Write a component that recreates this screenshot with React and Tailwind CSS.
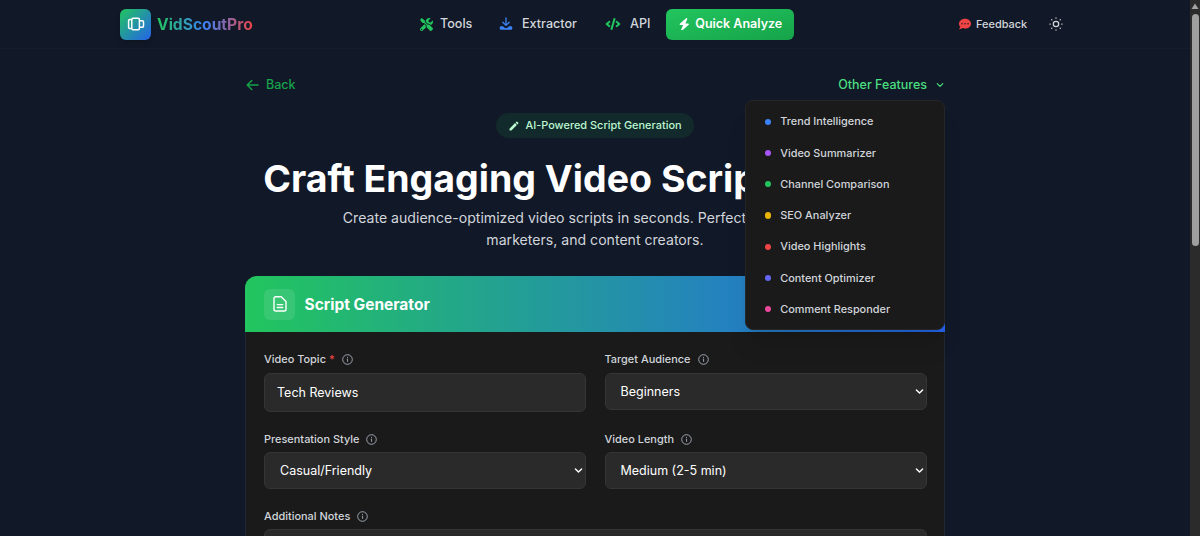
import React from "react";
import { FaTools, FaCode, FaCommentDots } from "react-icons/fa";
import { FaBolt } from "react-icons/fa6";
import { MdEdit } from "react-icons/md";

const features = [
  ["Trend Intelligence", "bg-[#3b82f6]"],
  ["Video Summarizer", "bg-[#a855f7]"],
  ["Channel Comparison", "bg-[#22c55e]"],
  ["SEO Analyzer", "bg-[#eab308]"],
  ["Video Highlights", "bg-[#ef4444]"],
  ["Content Optimizer", "bg-[#6366f1]"],
  ["Comment Responder", "bg-[#ec4899]"],
];

function LogoIcon() {
  return (
    <svg width="18" height="14" viewBox="0 0 18 14" fill="none" stroke="white" strokeWidth="1.5" strokeLinejoin="round">
      <rect x="4.8" y="1.2" width="7.6" height="11.6" rx="1.2" />
      <path d="M4.8 2.4H2.9a1.3 1.3 0 0 0-1.3 1.3v6.6a1.3 1.3 0 0 0 1.3 1.3h1.9" />
      <path d="M12.4 3.8h2.9a1.2 1.2 0 0 1 1.2 1.2v4a1.2 1.2 0 0 1-1.2 1.2h-2.9" />
    </svg>
  );
}

function ExtractIcon() {
  return (
    <svg width="14" height="14" viewBox="0 0 14 14" fill="none" stroke="currentColor" strokeLinecap="round" strokeLinejoin="round">
      <path d="M7 .9v7M3.8 5.2 7 8.4l3.2-3.2" strokeWidth="1.3" />
      <path d="M2 9.2h2.1c.6 1.2 1.6 1.8 2.9 1.8s2.3-.6 2.9-1.8H12a1.3 1.3 0 0 1 1.3 1.3v1A1.3 1.3 0 0 1 12 12.8H2a1.3 1.3 0 0 1-1.3-1.3v-1A1.3 1.3 0 0 1 2 9.2Z" fill="currentColor" stroke="none" />
    </svg>
  );
}

function SunIcon() {
  return (
    <svg width="14" height="14" viewBox="0 0 14 14" fill="none" stroke="currentColor" strokeWidth="1.25" strokeLinecap="round">
      <circle cx="7" cy="7" r="2.7" />
      <path d="M7 .9v.3M7 12.8v.3M.9 7h.3M12.8 7h.3M2.7 2.7l.2.2M11.1 11.1l.2.2M2.7 11.3l.2-.2M11.1 2.9l.2-.2" />
    </svg>
  );
}

function Chevron({ className, size = 9 }) {
  return (
    <svg className={className} width={size} height={size} viewBox="0 0 9 9" fill="none" stroke="currentColor" strokeWidth="1.4" strokeLinecap="round" strokeLinejoin="round">
      <path d="m1.4 3 3.1 3.1L7.6 3" />
    </svg>
  );
}

function InfoIcon() {
  return (
    <svg className="ml-[7px] text-[#9ca3af]" width="11" height="11" viewBox="0 0 11 11" fill="none" stroke="currentColor">
      <circle cx="5.5" cy="5.5" r="4.8" />
      <path d="M4.8 5.1h.8v2.7M5.5 2.9v1" />
    </svg>
  );
}

function Label({ children }) {
  return (
    <label className="flex h-4 items-center text-[10.94px] font-medium text-[#d1d5db]">
      {children}
      <InfoIcon />
    </label>
  );
}

function SelectField({ label, value }) {
  return (
    <div>
      <Label>{label}</Label>
      <div className="mt-[5px] flex h-[37px] items-center justify-between rounded-md border border-[#353535] bg-[#2a2a2a] pl-[15px] pr-[2px] text-[12.5px] text-white">
        <span className="pt-px">{value}</span>
        <Chevron />
      </div>
    </div>
  );
}

function Header() {
  return (
    <header className="flex h-[49px] items-center border-b border-[#141d2e] pl-[120px] text-[#d1d5db]">
      <div className="flex w-[300px] items-center">
        <div className="flex size-[31px] items-center justify-center rounded-md bg-linear-to-br/srgb from-[#22c55e] to-[#2563eb] shadow-md">
          <LogoIcon />
        </div>
        <span className="ml-[6px] bg-linear-to-r/srgb from-[#22c55e] via-[#3b82f6] to-[#ef4444] bg-clip-text pt-px text-[15.6px] font-bold text-transparent">
          VidScoutPro
        </span>
      </div>
      <nav className="flex w-[539px] items-center text-[12.6px] font-medium">
        <FaTools className="size-[13px] text-[#22c55e]" />
        <span className="ml-[7px] w-[59px] pt-px">Tools</span>
        <span className="text-[#3b82f6]"><ExtractIcon /></span>
        <span className="ml-[9px] w-[83px] pt-px">Extractor</span>
        <FaCode className="h-[12px] w-[16px] text-[#22c55e]" />
        <span className="ml-[9px] w-[36px] pt-px">API</span>
        <button className="flex h-[31px] w-[128px] items-center justify-center gap-[5px] rounded-md bg-linear-to-br/srgb from-[#22c55e] to-[#16a34a] text-[12.5px] font-semibold text-white">
          <FaBolt className="size-[12.5px]" />
          <span className="pt-px">Quick Analyze</span>
        </button>
      </nav>
      <div className="flex items-center text-[10.94px] font-medium">
        <FaCommentDots className="size-[12px] text-[#ef4444]" />
        <span className="ml-[5px] w-[73px] pt-px">Feedback</span>
        <SunIcon />
      </div>
    </header>
  );
}

function FeatureMenu() {
  return (
    <div className="absolute right-0 top-[25px] z-10 h-[230px] w-[200px] rounded-lg border border-[#262626] bg-[#1a1a1a] py-[5px] shadow-xl">
      {features.map(([name, color]) => (
        <div key={name} className="flex h-[31.25px] items-center pl-[18.5px] text-[10.9px] text-[#d1d5db]">
          <span className={`mr-[9.5px] size-[6.25px] rounded-full ${color}`} />
          {name}
        </div>
      ))}
    </div>
  );
}

function Scrollbar() {
  return (
    <div className="flex h-full w-[10px] shrink-0 flex-col items-center bg-[#2b2b2b]">
      <svg className="mt-[3px]" width="8" height="7" viewBox="0 0 8 7">
        <path d="M4 .5 7.5 6h-7Z" fill="#a3a3a3" />
      </svg>
      <div className="mt-[4px] h-[232px] w-[7px] rounded-full bg-[#9f9f9f]" />
    </div>
  );
}

export default function App() {
  return (
    <div className="flex h-[536px] overflow-hidden bg-[#111827] font-['Inter',sans-serif]">
      <div className="flex-1 overflow-hidden">
        <Header />
        <main className="mx-auto w-[700px] pt-[26px]">
          <div className="relative flex h-5 items-center justify-between text-[12.5px] font-medium">
            <div className="flex items-center text-[#16a34a]">
              <svg className="ml-px" width="13" height="12" viewBox="0 0 13 12" fill="none" stroke="currentColor" strokeWidth="1.4" strokeLinecap="round" strokeLinejoin="round">
                <path d="M12 6H1.2M5.8 1.4 1.2 6l4.6 4.6" />
              </svg>
              <span className="ml-[7px]">Back</span>
            </div>
            <div className="flex items-center text-[#4ade80]">
              Other Features
              <Chevron size={8} className="ml-[9px] mr-[1px]" />
            </div>
            <FeatureMenu />
          </div>

          <section className="flex flex-col items-center">
            <div className="mt-[18px] flex h-[25px] items-center rounded-full bg-[#122a2b] px-3 text-[10.94px] font-medium text-[#bbf7d0]">
              <MdEdit className="mr-[5px] size-[12px]" />
              AI-Powered Script Generation
            </div>
            <h1 className="mt-[19px] whitespace-nowrap text-[37.5px] font-bold leading-[43px] text-white">
              Craft Engaging Video Scripts with AI
            </h1>
            <p className="mt-[7px] w-[525px] text-center text-[14.1px] leading-[22px] text-[#d1d5db]">
              Create audience-optimized video scripts in seconds. Perfect for YouTubers, marketers, and content creators.
            </p>
          </section>

          <section className="mt-[25px] h-[400px] overflow-hidden rounded-t-xl bg-[#1a1a1a]">
            <div className="flex h-[56px] items-center bg-linear-to-r/srgb from-[#22c55e] to-[#2563eb] pl-[19px]">
              <div className="flex size-[31px] items-center justify-center rounded-md bg-white/10 text-white">
                <svg width="14" height="16" viewBox="0 0 14 16" fill="none" stroke="currentColor" strokeWidth="1.4" strokeLinejoin="round" strokeLinecap="round">
                  <path d="M2.6.8h5.6L13 5.4v8a1.6 1.6 0 0 1-1.6 1.6H2.6A1.6 1.6 0 0 1 1 13.4V2.4A1.6 1.6 0 0 1 2.6.8ZM4.3 8.6h5.4M4.3 11.5h5.4" />
                </svg>
              </div>
              <h2 className="ml-[9.5px] pt-px text-[15.5px] font-bold text-white">Script Generator</h2>
            </div>
            <form className="border-x border-[#222831] pl-[18px] pr-[17.5px] pt-[19px]">
              <div className="grid grid-cols-2 gap-x-[18.5px]">
                <div className="h-[80px]">
                  <Label>Video Topic <span className="ml-[3px] text-[#ef4444]">*</span></Label>
                  <input readOnly value="Tech Reviews" className="mt-[6px] block h-[39px] w-full rounded-md border border-[#353535] bg-[#2a2a2a] px-[12px] text-[12.5px] text-white outline-none" />
                </div>
                <div className="[&>div>div]:mt-[6px]">
                  <SelectField label="Target Audience" value="Beginners" />
                </div>
                <SelectField label="Presentation Style" value="Casual/Friendly" />
                <SelectField label="Video Length" value="Medium (2-5 min)" />
              </div>
              <div className="mt-[19px]">
                <Label>Additional Notes</Label>
                <div className="mt-[5px] h-[90px] rounded-md border border-[#353535] bg-[#2a2a2a]" />
              </div>
            </form>
          </section>
        </main>
      </div>
      <Scrollbar />
    </div>
  );
}
